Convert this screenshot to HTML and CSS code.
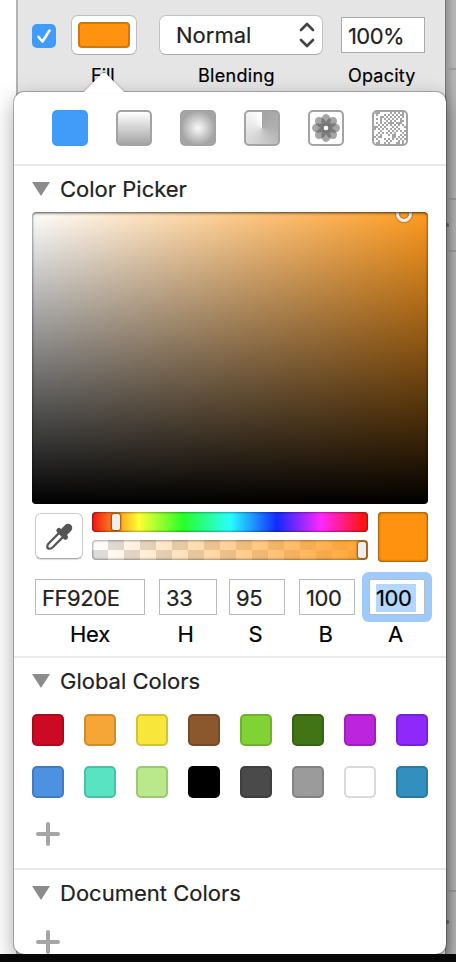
FILE: index.html
```html
<!DOCTYPE html>
<html lang="en">
<head>
<meta charset="utf-8">
<title>Fill color</title>
<link rel="stylesheet" href="styles.css">
</head>
<body>
<div class="backdrop">
  <div class="canvas"></div>
  <div class="inspector">
    <div class="fillbar">
      <div class="check"><svg width="24" height="24" viewBox="0 0 24 24"><path d="M6.500 13l4 4.500L17.500 6.500" fill="none" stroke="#fff" stroke-width="2.600" stroke-linecap="round" stroke-linejoin="round"/></svg></div>
      <div class="well"><div class="well-color"></div></div>
      <div class="select"><span class="t-normal">Normal</span><svg width="18" height="26" viewBox="0 0 18 26"><path d="M3 8l6-6 6 6M3 18l6 6 6-6" fill="none" stroke="#444" stroke-width="2.7" stroke-linecap="round" stroke-linejoin="round"/></svg></div>
      <div class="opacity"><span>100%</span></div>
    </div>
    <div class="captions"><span class="c-fill">Fill</span><span class="c-blend">Blending</span><span class="c-opac">Opacity</span></div>
  </div>
  <div class="rail"><i class="r1"></i><i class="r2"></i><i class="r3"></i><i class="r4"></i><b class="d1"></b><b class="d2"></b></div>
</div>
<div class="floor"></div>
<div class="popover">
  <svg class="arrow" width="50" height="22" viewBox="0 0 50 22"><path d="M3 22C5 21 6 20 7 19L23 2.500Q25 .7 27 2.500L43 19C44 20 45 21 47 22Z" fill="#fff"/></svg>
  <div class="types">
    <div class="type solid"></div>
    <div class="type linear"></div>
    <div class="type radial"></div>
    <div class="type angular"></div>
    <div class="type pattern"><svg width="36" height="36" viewBox="0 0 36 36"><g fill="#555" fill-opacity=".52"><ellipse id="p" cx="18" cy="10.500" rx="4.800" ry="6.500"/><use href="#p" transform="rotate(45 18 18)"/><use href="#p" transform="rotate(90 18 18)"/><use href="#p" transform="rotate(135 18 18)"/><use href="#p" transform="rotate(180 18 18)"/><use href="#p" transform="rotate(225 18 18)"/><use href="#p" transform="rotate(270 18 18)"/><use href="#p" transform="rotate(315 18 18)"/></g><circle cx="18" cy="18" r="2.300" fill="#fff"/></svg></div>
    <div class="type noise"><svg id="noise" width="36" height="36" viewBox="0 0 36 36"></svg></div>
  </div>
  <section class="picker">
    <h2><i class="tri"></i><span class="h-picker">Color Picker</span></h2>
    <div class="field"><div class="ring"></div></div>
    <div class="controls">
      <div class="dropper"><svg width="28" height="28" viewBox="0 0 28 28"><g transform="rotate(45 14 14)" fill="#555"><rect x="9.800" y="-3" width="8.400" height="13" rx="4.200"/><rect x="6.800" y="7" width="14.400" height="5" rx="2.500"/><path d="M11.200 11v15q.2 3 2.800 4 2.600-1 2.800-4V11" fill="none" stroke="#555" stroke-width="2.200" stroke-linejoin="round"/></g></svg></div>
      <div class="sliders">
        <div class="slider hue"><div class="knob"></div></div>
        <div class="slider alpha"><div class="knob"></div></div>
      </div>
      <div class="current"></div>
    </div>
    <div class="values">
      <label class="v-hex"><span class="box">FF920E</span><span class="name">Hex</span></label>
      <label class="v-h"><span class="box">33</span><span class="name">H</span></label>
      <label class="v-s"><span class="box">95</span><span class="name">S</span></label>
      <label class="v-b"><span class="box">100</span><span class="name">B</span></label>
      <label class="v-a"><span class="box focus"><mark>100</mark></span><span class="name">A</span></label>
    </div>
  </section>
  <section class="global">
    <h2><i class="tri"></i><span class="h-global">Global Colors</span></h2>
    <div class="swatches">
      <i class="red"></i><i class="orange"></i><i class="yellow"></i><i class="brown"></i><i class="lime"></i><i class="green"></i><i class="magenta"></i><i class="violet"></i>
      <i class="blue"></i><i class="mint"></i><i class="pale"></i><i class="black"></i><i class="dark"></i><i class="gray"></i><i class="white"></i><i class="teal"></i>
    </div>
    <svg class="plus" width="24" height="24" viewBox="0 0 24 24"><path d="M12 2v20M2 12h20" stroke="#a6a6a6" stroke-width="4" stroke-linecap="round"/></svg>
  </section>
  <section class="document">
    <h2><i class="tri"></i><span class="h-doc">Document Colors</span></h2>
    <svg class="plus" width="24" height="24" viewBox="0 0 24 24"><path d="M12 2v20M2 12h20" stroke="#a6a6a6" stroke-width="4" stroke-linecap="round"/></svg>
  </section>
</div>
<script src="noise.js"></script>
</body>
</html>
```
FILE: styles.css
```css
* { box-sizing: border-box; }
body { margin: 0; width: 456px; height: 962px; overflow: hidden; position: relative; background: #fff; font: 22px/28px Inter, "Liberation Sans", sans-serif; color: #222; -webkit-text-stroke: .2px; }
.backdrop { display: grid; grid-template-columns: 16px 429px 11px; height: 954px; }
.canvas { background: #fff; }
.inspector { background: #e5e5e5; border-left: 2px solid #b3b3b3; }
.floor { position: relative; z-index: 2; height: 8px; background: #080808; }
.fillbar { display: flex; padding: 15px 0 0 14px; height: 61px; }
.check { width: 24px; height: 24px; margin-top: 9px; border-radius: 5px; background: #419bf9; }
.check svg, .type svg, .dropper svg, .plus { display: block; }
.well { width: 66px; height: 40px; margin-left: 15px; border: 1px solid #bdbdbd; border-bottom-color: #aaa; border-radius: 7px; background: #fff; padding: 6px; }
.well-color { height: 26px; border: 2px solid #cf780f; border-radius: 4px; background: #ff920e; }
.select { width: 164px; height: 40px; margin-left: 22px; display: flex; align-items: center; justify-content: space-between; padding: 0 6px 0 16px; border: 1px solid #c2c2c2; border-bottom-color: #aaa; border-radius: 7px; background: #fff; }
.opacity { width: 84px; height: 36px; margin: 2px 0 0 18px; padding: 4px 0 0 6px; border: 1px solid #aaa; background: #fff; letter-spacing: -.6px; }
.captions { display: flex; color: #000; font-size: 18px; line-height: 30px; }
.captions span { white-space: nowrap; }
.c-fill { margin-left: 73px; width: 107px; }
.c-blend { width: 150px; letter-spacing: .3px; }
.c-opac { letter-spacing: .2px; }
.rail { position: relative; background: linear-gradient(90deg, #959595, #b3b3b3 80%); border-left: 1px solid #777; }
.rail i { position: absolute; left: 0; width: 11px; height: 2px; background: #999; }
.rail .r1 { top: 68px; } .rail .r2 { top: 198px; } .rail .r3 { top: 250px; } .rail .r4 { top: 890px; }
.rail b { position: absolute; left: 0; width: 3px; height: 4px; border-radius: 2px; background: #666; }
.rail .d1 { top: 223px; } .rail .d2 { top: 920px; }
.popover { position: absolute; left: 14px; top: 92px; width: 432px; height: 862px; border-radius: 10px; background: #fff; box-shadow: 0 0 0 1px rgba(0,0,0,.25), 0 8px 22px rgba(0,0,0,.36); }
.arrow { position: absolute; left: 65px; top: -21px; filter: drop-shadow(0 -1px 1px rgba(0,0,0,.2)); }
.types { display: flex; gap: 28px; height: 74px; padding: 18px 38px 0; border-bottom: 2px solid #e9e9e9; }
.type { width: 36px; height: 36px; border-radius: 5px; border: 2px solid #a3a3a3; overflow: hidden; }
.type svg { margin: -2px; }
.solid { background: #419bf9; border: 0; }
.linear { background: linear-gradient(#fff, #a5a5a5); }
.radial { background: radial-gradient(circle, #fbfbfb, #a5a5a5 75%); }
.angular { background: conic-gradient(#a5a5a5, #b0b0b0 25%, #ccc 50%, #fff); }
h2 { display: flex; align-items: center; margin: 0; font-size: 22px; line-height: 28px; font-weight: 400; }
.tri { width: 18px; height: 14px; margin-right: 10px; background: #8c8c8c; clip-path: polygon(0 0, 100% 0, 50% 100%); }
.picker { height: 492px; padding: 9px 18px 0; border-bottom: 2px solid #e9e9e9; }
.field { position: relative; height: 292px; margin-top: 9px; border-radius: 4px; overflow: hidden; background: linear-gradient(transparent, #000), linear-gradient(90deg, #fff, #ff9a1e); }
.field::after { content: ""; position: absolute; inset: 0; border-radius: 4px; box-shadow: inset 0 1px 3px rgba(0,0,0,.75); }
.ring { position: absolute; left: 364px; top: -6px; width: 16px; height: 16px; border: 3px solid #eee; border-radius: 50%; box-shadow: 0 0 2px rgba(0,0,0,.7), inset 0 0 2px rgba(0,0,0,.7); }
.controls { display: flex; height: 59px; padding-top: 8px; }
.dropper { width: 48px; height: 46px; margin: 1px 9px 0 3px; padding: 9px; border: 1px solid #ccc; border-bottom-color: #aaa; border-radius: 6px; box-shadow: 0 1px 1px #ddd; }
.dropper svg { overflow: visible; }
.sliders { width: 276px; display: grid; gap: 8px; grid-auto-rows: 20px; }
.slider { border-radius: 4px; box-shadow: inset 0 0 3px rgba(0,0,0,.7); padding: 2px 20px; }
.hue { background: linear-gradient(90deg, #f01414, #ff981e 9%, #ffff32 17%, #28ff28 33%, #28ffff 50%, #1428ff 67%, #ff28ff 83%, #ff1414 98%); }
.alpha { padding-left: 266px; padding-right: 0; background: linear-gradient(90deg, #ff9a1e00, #ff9a1ee8), repeating-conic-gradient(#ddd 0 25%, #fff 0 50%) 0 -6px / 32px 32px; }
.knob { width: 8px; height: 16px; border-radius: 2px; background: #eee; box-shadow: 0 0 2px 1px rgba(90,45,0,.7); }
.current { width: 50px; height: 50px; margin-left: 10px; border-radius: 4px; background: #ff920e; box-shadow: inset 0 0 3px rgba(0,0,0,.8); }
.values { display: flex; padding: 16px 0 0 3px; color: #222; }
.values label { display: flex; flex-direction: column; align-items: center; }
.box { width: 100%; height: 36px; padding: 4px 0 0 6px; border: 1px solid #bbb; background: #fff; letter-spacing: -.45px; }
.name { color: #000; line-height: 38px; letter-spacing: -.2px; margin-right: 3px; }
.v-hex { width: 110px; margin-right: 14px; }
.v-hex .name { margin-right: 0; }
.v-h { width: 58px; margin-right: 12px; }
.v-h .name { margin-right: 5px; }
.v-s { width: 56px; margin-right: 14px; }
.v-b { width: 56px; margin-right: 14px; }
.v-a { width: 56px; }
.focus { box-shadow: 0 0 0 7px #9fcbfb; border-radius: 2px; }
mark { display: block; width: 40px; background: #b3d7ff; color: #000; }
.global { height: 212px; padding: 9px 18px 0; border-bottom: 2px solid #e9e9e9; }
.swatches { display: grid; grid-template-columns: repeat(8, 32px); gap: 20px; margin-top: 19px; }
.swatches i { height: 32px; border-radius: 5px; border: 2px solid rgba(0,0,0,.15); }
.red { background: #cd0a24; } .orange { background: #f5a636; } .yellow { background: #f8e63b; } .brown { background: #8b582e; }
.lime { background: #81d335; } .green { background: #417414; } .magenta { background: #bc25dc; } .violet { background: #8f29fb; }
.blue { background: #4d91e1; } .mint { background: #58e3c3; } .pale { background: #b9e98a; } .black { background: #000; }
.dark { background: #4a4a4a; } .gray { background: #9b9b9b; } .white { background: #fff; } .teal { background: #338fbd; }
.plus { margin: 24px 0 0 4px; }
.document { padding: 9px 18px 0; }
.document .plus { margin-top: 23px; }
```
FILE: noise.js
```js
const svg = document.getElementById("noise");
let seed = 90210, d = "";
for (let y = 2; y < 34; y += 2) for (let x = 2; x < 34; x += 2) {
  seed = (seed * 16807) % 2147483647;
  const r = seed / 2147483647;
  const even = (x + y) % 4 === 0;
  if (even ? r < 0.8 : r < 0.15) d += `M${x} ${y}h2v2h-2z`;
}
svg.innerHTML = `<path d="${d}" fill="#a5a5a5"/>`;
```
